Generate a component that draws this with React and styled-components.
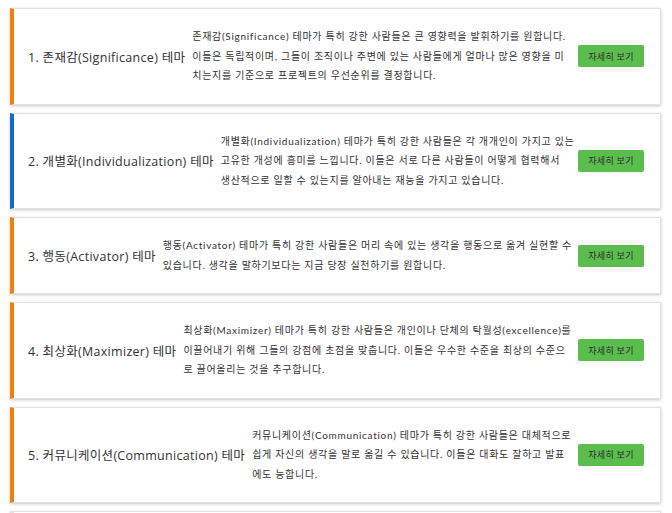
import React from 'react';
import styled, { createGlobalStyle } from 'styled-components';

// description lines are kept as shown (fixed wrap points)
const themes = [
  {
    title: '1. 존재감(Significance) 테마',
    lines: [
      '존재감(Significance) 테마가 특히 강한 사람들은 큰 영향력을 발휘하기를 원합니다.',
      '이들은 독립적이며, 그들이 조직이나 주변에 있는 사람들에게 얼마나 많은 영향을 미',
      '치는지를 기준으로 프로젝트의 우선순위를 결정합니다.',
    ],
    accent: '#f07f0e',
  },
  {
    title: '2. 개별화(Individualization) 테마',
    lines: [
      '개별화(Individualization) 테마가 특히 강한 사람들은 각 개개인이 가지고 있는',
      '고유한 개성에 흥미를 느낍니다. 이들은 서로 다른 사람들이 어떻게 협력해서',
      '생산적으로 일할 수 있는지를 알아내는 재능을 가지고 있습니다.',
    ],
    accent: '#1769c9',
  },
  {
    title: '3. 행동(Activator) 테마',
    lines: [
      '행동(Activator) 테마가 특히 강한 사람들은 머리 속에 있는 생각을 행동으로 옮겨 실현할 수',
      '있습니다. 생각을 말하기보다는 지금 당장 실천하기를 원합니다.',
    ],
    accent: '#f07f0e',
  },
  {
    title: '4. 최상화(Maximizer) 테마',
    lines: [
      '최상화(Maximizer) 테마가 특히 강한 사람들은 개인이나 단체의 탁월성(excellence)를',
      '이끌어내기 위해 그들의 강점에 초점을 맞춥니다. 이들은 우수한 수준을 최상의 수준으',
      '로 끌어올리는 것을 추구합니다.',
    ],
    accent: '#f07f0e',
  },
  {
    title: '5. 커뮤니케이션(Communication) 테마',
    lines: [
      '커뮤니케이션(Communication) 테마가 특히 강한 사람들은 대체적으로',
      '쉽게 자신의 생각을 말로 옮길 수 있습니다. 이들은 대화도 잘하고 발표',
      '에도 능합니다.',
    ],
    accent: '#f07f0e',
  },
];

const GlobalStyle = createGlobalStyle`
  body {
    margin: 0;
    background: #fff;
    font-family: "Open Sans", "Noto Sans CJK KR", sans-serif;
    color: #333;
  }
`;

const List = styled.div`
  display: flex;
  flex-direction: column;
  gap: 8px;
  padding: 8px 11px 0 10px;
  height: 513px;
  overflow: hidden;
  box-sizing: border-box;
`;

const Card = styled.div`
  display: flex;
  flex: none;
  align-items: center;
  background: #fff;
  border: 1px solid #e2e2e2;
  border-left: 4px solid ${(p) => p.accent};
  box-shadow: 0 1px 3px rgba(0, 0, 0, 0.22);
  padding: 18px 16px 18px 14px;
  min-height: 38px;
`;

const Title = styled.h3`
  margin: 0;
  flex: none;
  font-size: 12.5px;
  font-weight: 400;
  letter-spacing: 0.3px;
  color: #333;
  padding-right: 7px;
`;

const Desc = styled.p`
  margin: 0;
  flex: 1;
  min-width: 0;
  font-family: "Lato", "Noto Sans CJK KR", sans-serif;
  font-size: 10px;
  line-height: 19.5px;
  letter-spacing: 0.7px;
  color: #333;
`;

const Line = styled.span`
  display: block;
  white-space: nowrap;
`;

const Button = styled.button`
  flex: none;
  margin-left: 13px;
  width: 66px;
  height: 22px;
  border: none;
  border-radius: 2px;
  background: #5cbd4f;
  color: #2a2a2a;
  font-family: inherit;
  font-size: 9px;
  letter-spacing: 0.3px;
  cursor: pointer;
`;

const App = () => {
  return (
    <>
      <GlobalStyle />
      <List>
        {themes.map((t) => (
          <Card key={t.title} accent={t.accent}>
            <Title>{t.title}</Title>
            <Desc>
              {t.lines.map((l) => (
                <Line key={l}>{l}</Line>
              ))}
            </Desc>
            <Button>자세히 보기</Button>
          </Card>
        ))}
        <Card accent="#e2e2e2" />
      </List>
    </>
  );
};

export default App;
